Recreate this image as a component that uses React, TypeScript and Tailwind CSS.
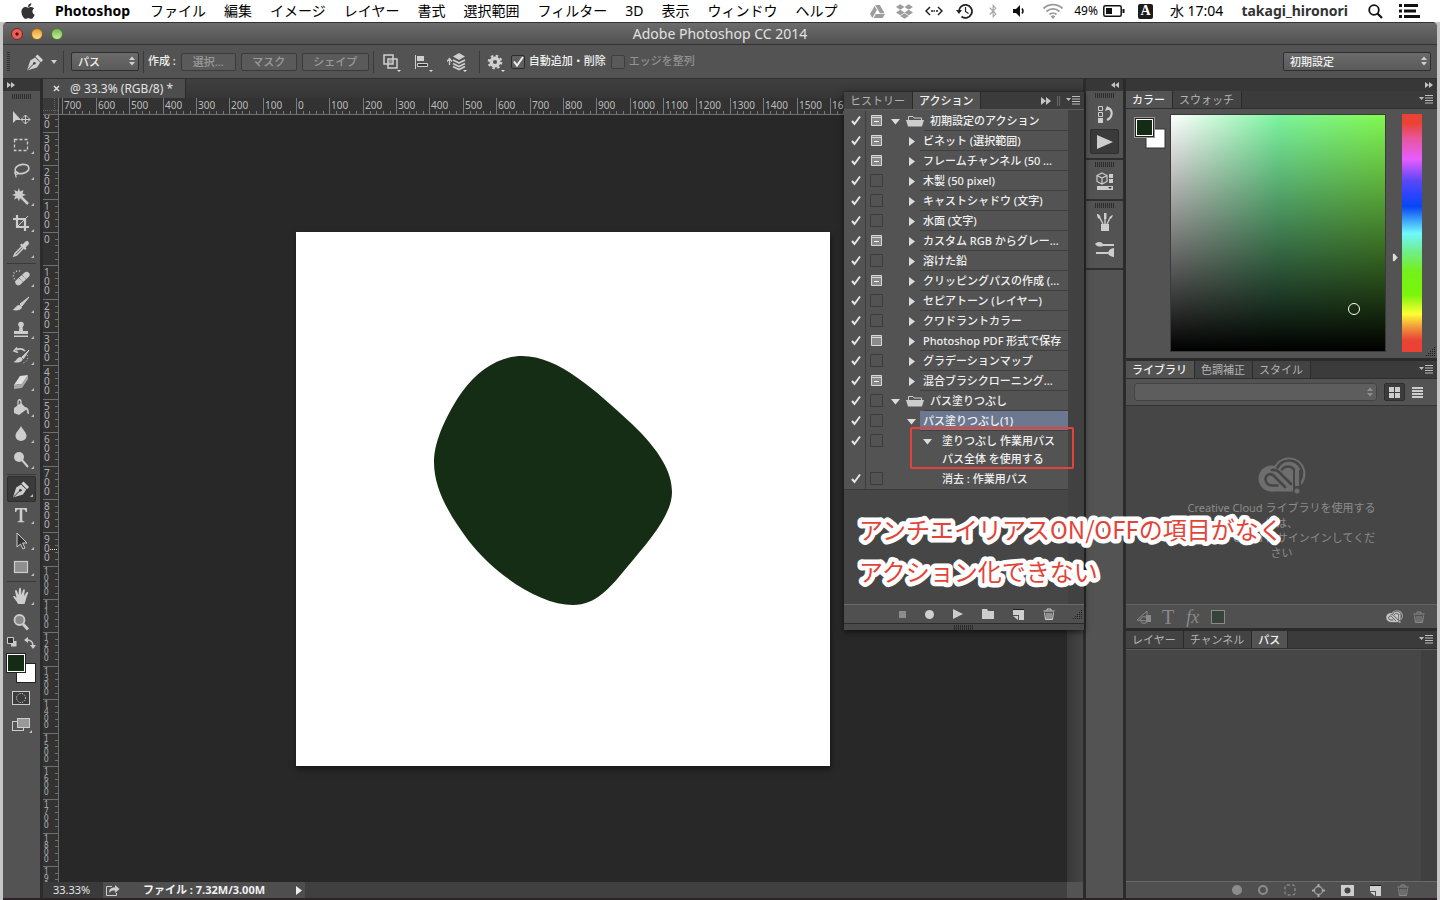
import type { ReactNode } from "react";
import { FaApple, FaBluetoothB, FaDropbox, FaGoogleDrive } from "react-icons/fa";

const MENUS = ["ファイル", "編集", "イメージ", "レイヤー", "書式", "選択範囲", "フィルター", "3D", "表示", "ウィンドウ", "ヘルプ"];

// px per 100 document units at 33.3%
const STEP = 33.37;
const ORIGIN_X = 237;
const ORIGIN_Y = 117;

type Row = {
  text: string;
  kind: "set" | "action" | "step";
  modal?: "dash" | "plain";
  open?: boolean;
  selected?: boolean;
  detail?: string;
};

const ROWS: Row[] = [
  { text: "初期設定のアクション", kind: "set", modal: "dash", open: true },
  { text: "ビネット (選択範囲)", kind: "action", modal: "dash" },
  { text: "フレームチャンネル (50 ...", kind: "action", modal: "dash" },
  { text: "木製 (50 pixel)", kind: "action" },
  { text: "キャストシャドウ (文字)", kind: "action" },
  { text: "水面 (文字)", kind: "action" },
  { text: "カスタム RGB からグレー...", kind: "action", modal: "dash" },
  { text: "溶けた鉛", kind: "action" },
  { text: "クリッピングパスの作成 (...", kind: "action", modal: "dash" },
  { text: "セピアトーン (レイヤー)", kind: "action" },
  { text: "クワドラントカラー", kind: "action" },
  { text: "Photoshop PDF 形式で保存", kind: "action", modal: "plain" },
  { text: "グラデーションマップ", kind: "action" },
  { text: "混合ブラシクローニング...", kind: "action", modal: "dash" },
  { text: "パス塗りつぶし", kind: "set", open: true },
  { text: "パス塗りつぶし(1)", kind: "action", open: true, selected: true },
  { text: "塗りつぶし 作業用パス", kind: "step", open: true, detail: "パス全体 を使用する" },
  { text: "消去 : 作業用パス", kind: "step" },
];

function Svg({ w, h, children, className = "" }: { w: number; h: number; children: ReactNode; className?: string }) {
  return (
    <svg width={w} height={h} viewBox={`0 0 ${w} ${h}`} fill="none" className={`shrink-0 ${className}`} aria-hidden="true">
      {children}
    </svg>
  );
}

/* ---------- small shared glyphs ---------- */

const PenNib = () => (
  <Svg w={20} h={20}>
    <path d="M12.5 2.5 18 8l-2 2.2-5.6-5.7z" fill="#d6d6d6" />
    <path d="M10 5.4 15.2 10.6 12 15.4 2 18.6 5.2 8.6z" fill="#cfcfcf" />
    <path d="M2.4 18.2 9 11.6" stroke="#444" strokeWidth="1" />
    <circle cx="9.4" cy="11.2" r="1.3" fill="#444" />
  </Svg>
);

const DoubleArrow = ({ left = false }: { left?: boolean }) => (
  <Svg w={8} h={6} className={left ? "rotate-180" : ""}>
    <path d="M0 0 4 3 0 6zM4 0 8 3 4 6z" fill="#c4c4c4" />
  </Svg>
);

const Gripper = () => (
  <Svg w={20} h={5}>
    {Array.from({ length: 10 }, (_, i) => (
      <rect key={i} x={i * 2} y={0} width={1} height={5} fill="#2c2c2c" />
    ))}
  </Svg>
);

const Stepper = ({ dim = false }: { dim?: boolean }) => (
  <Svg w={6} h={10}>
    <path d="M0 4 3 0.5 6 4zM0 6 3 9.5 6 6z" fill={dim ? "#8f8f8f" : "#d0d0d0"} />
  </Svg>
);

const Caret = () => (
  <Svg w={6} h={4}>
    <path d="M0 0h6L3 4z" fill="#d0d0d0" />
  </Svg>
);

const PanelMenu = () => (
  <button aria-label="パネルメニュー" className="flex items-center">
    <Svg w={14} h={9}>
      <path d="M0 2h5L2.500 5z" fill="#bdbdbd" />
      <path d="M6 .5h8M6 3h8M6 5.500h8M6 8h8" stroke="#bdbdbd" />
    </Svg>
  </button>
);

const ResizeCorner = () => (
  <Svg w={9} h={9}>
    {[0, 1, 2, 3, 4].map((r) =>
      Array.from({ length: r + 1 }, (_, c) => <rect key={`${r}-${c}`} x={8 - c * 2} y={r * 2} width={1} height={1} fill="#1f1f1f" />),
    )}
  </Svg>
);

const Trash = ({ dim = false }: { dim?: boolean }) => (
  <Svg w={12} h={12}>
    <g stroke={dim ? "#8a8a8a" : "#d0d0d0"}>
      <path d="M.5 3h11M4 2.500V1h4v1.500" />
      <path d="M1.500 4.500 2.500 11.500h7l1-7M4 5v6M6 5v6M8 5v6" />
    </g>
  </Svg>
);

const NewItem = () => (
  <Svg w={11} h={11}>
    <path d="M0 1h11v10H6V6H0z" fill="#cfcfcf" />
    <path d="M0 7h5v4z" fill="#cfcfcf" />
    <path d="M0 .5h11" stroke="#1c1c1c" />
  </Svg>
);

const CreativeCloud = ({ size, color, cut }: { size: number; color: string; cut: string }) => (
  <svg width={size} height={Math.round(size * 0.77)} viewBox="0 0 48 37" fill="none" aria-hidden="true">
    <circle cx="31" cy="17" r="16.500" fill={color} />
    <circle cx="13.500" cy="21.500" r="13" fill={color} />
    <path d="M13 20h26v14.500H13z" fill={color} />
    <path d="M19 11.500A13 13 0 0 1 44 17c0 3-1 5.500-2.500 7.500" stroke={cut} strokeWidth="2.600" />
    <path d="M27 30 15.500 18.500C12 15.500 7.500 18 7.500 22c0 4 3 6.500 7 6.500h5" stroke={cut} strokeWidth="2.600" strokeLinecap="round" />
    <path d="M14 13c3-.5 5.500.5 7.500 2.500L33 27" stroke={cut} strokeWidth="2.600" strokeLinecap="round" />
    <path d="M24 12.500c3-4 9-4 12 0" stroke={cut} strokeWidth="2.600" strokeLinecap="round" />
    <path d="M39 13v24" stroke={cut} strokeWidth="8" />
    <path d="M39 13v16" stroke={color} strokeWidth="4" />
    <circle cx="39" cy="34" r="2.500" fill={color} />
  </svg>
);

/* ---------- mac menu bar ---------- */

function MenuBar() {
  return (
    <header className="flex h-[22px] shrink-0 items-center justify-between bg-white pl-[19px] pr-5 text-[14px] leading-5 text-black">
      <nav className="flex items-center gap-[18px] whitespace-nowrap">
        <FaApple size={18} className="text-[#333]" />
        <button className="pr-0.5 font-bold">Photoshop</button>
        {MENUS.map((m) => (
          <button key={m}>{m}</button>
        ))}
      </nav>
      <div className="flex items-center whitespace-nowrap">
        <FaGoogleDrive size={15} className="mr-[11px] text-[#9d9d9d]" />
        <FaDropbox size={17} className="mr-3 text-[#9d9d9d]" />
        <Svg w={18} h={10} className="mr-[13px]">
          <path d="M5 1 1 5l4 4M13 1l4 4-4 4" stroke="#222" strokeWidth="1.500" />
          <path d="M6 5h2M8.500 5h1.500M11 5h2" stroke="#222" strokeWidth="1.500" />
        </Svg>
        <Svg w={17} h={16} className="mr-[13px]">
          <path d="M3 9a6.500 6.500 0 1 1 2.500 4.500" stroke="#222" strokeWidth="1.800" />
          <path d="M0 7h6L3 11z" fill="#222" />
          <path d="M9.500 4v4.500l3 2" stroke="#222" strokeWidth="1.200" />
        </Svg>
        <FaBluetoothB size={14} className="mr-[13px] text-[#a5a5a5]" />
        <Svg w={13} h={12} className="mr-4">
          <path d="M0 4h3l4-4v12L3 8H0z" fill="#111" />
          <path d="M9 3.500a4 4 0 0 1 0 5" stroke="#111" strokeWidth="1.500" />
        </Svg>
        <Svg w={22} h={16} className="mr-[10px]">
          <path d="M1.500 5.500a13.500 13.500 0 0 1 19 0M4.500 8.500a9.500 9.500 0 0 1 13 0M7.500 11.500a5 5 0 0 1 7 0" stroke="#9a9a9a" strokeWidth="1.800" />
          <path d="M11 16 8.800 13.500a3 3 0 0 1 4.400 0z" fill="#9a9a9a" />
        </Svg>
        <span className="mr-[5px] text-[12px]">49%</span>
        <Svg w={22} h={12} className="mr-[13px]">
          <rect x=".8" y=".8" width="17.400" height="10.400" rx="1.500" stroke="#111" strokeWidth="1.500" />
          <rect x="3" y="3" width="6" height="6" fill="#111" />
          <rect x="19.500" y="4" width="2" height="4" fill="#111" />
        </Svg>
        <span className="mr-[17px] flex h-[15px] w-[15px] items-center justify-center rounded-[2px] bg-[#1c1c1c] font-['Liberation_Serif'] text-[14px] font-bold text-white">
          A
        </span>
        <span className="mr-[18px]">水 17:04</span>
        <span className="mr-5 font-bold text-[#333]">takagi_hironori</span>
        <Svg w={15} h={15} className="mr-[16px]">
          <circle cx="6" cy="6" r="4.800" stroke="#111" strokeWidth="1.800" />
          <path d="m9.500 9.500 4.500 4.500" stroke="#111" strokeWidth="2.200" />
        </Svg>
        <Svg w={21} h={14}>
          <path d="M0 1.500h3M0 7h3M0 12.500h3M5 1.500h14M5 7h12M5 12.500h16" stroke="#111" strokeWidth="3" />
        </Svg>
      </div>
    </header>
  );
}

/* ---------- options bar ---------- */

const Divider = ({ className = "" }: { className?: string }) => <span className={`h-[22px] w-px bg-[#3a3a3a] ${className}`} />;

const OptButton = ({ children, className }: { children: ReactNode; className: string }) => (
  <button className={`h-[18px] rounded-[2px] border border-[#3b3b3b] bg-[#5a5a5a] leading-4 text-[#9a9a9a] ${className}`}>{children}</button>
);

function OptionsBar() {
  return (
    <div className="flex h-[34px] shrink-0 items-center border-b border-[#2f2f2f] bg-[#535353] pl-1 pr-1.5 text-[11px] font-medium text-[#f0f0f0]">
      <Svg w={4} h={19}>
        {Array.from({ length: 10 }, (_, i) => (
          <rect key={i} x={0} y={i * 2} width={3} height={1} fill="#333" />
        ))}
      </Svg>
      <button aria-label="ペンツール" className="ml-[14px] flex items-center gap-1.5">
        <PenNib />
        <Caret />
      </button>
      <Divider className="ml-1.5 mr-[7px]" />
      <div className="relative">
        <select aria-label="ツールモード" className="h-[19px] w-[68px] appearance-none rounded-[2px] border border-[#2e2e2e] bg-linear-to-b from-[#6a6a6a] to-[#5b5b5b] px-1.5 leading-4">
          <option>パス</option>
        </select>
        <span className="pointer-events-none absolute right-1 top-1">
          <Stepper />
        </span>
      </div>
      <Divider className="mx-1" />
      <span className="mr-[5px]">作成 :</span>
      <div className="flex gap-[5px]">
        <OptButton className="w-[55px]">選択...</OptButton>
        <OptButton className="w-[56px]">マスク</OptButton>
        <OptButton className="w-[67px]">シェイプ</OptButton>
      </div>
      <Divider className="ml-1 mr-[9px]" />
      <div className="flex items-center gap-3">
        <button aria-label="パスの操作">
          <Svg w={20} h={20}>
            <path d="M1 3h9v9H1zM5 7h9v9H5z" stroke="#d0d0d0" strokeWidth="1.500" />
            <path d="M6 8h3v3H6z" fill="#8a8a8a" />
            <path d="M14 18h4l-2 2z" fill="#ddd" />
          </Svg>
        </button>
        <button aria-label="パスの整列">
          <Svg w={20} h={20}>
            <path d="M.5 3v14" stroke="#d0d0d0" />
            <path d="M2 4h7v5H2z" fill="#d0d0d0" />
            <path d="M2.500 11.500h10v3h-10z" fill="#3a3a3a" stroke="#d0d0d0" />
            <path d="M14 18h4l-2 2z" fill="#ddd" />
          </Svg>
        </button>
        <button aria-label="パスの配置">
          <Svg w={22} h={20}>
            <path d="M2.500 13V8M0 9.500l2.500-3 2.500 3" stroke="#d0d0d0" strokeWidth="1.300" />
            <path d="m12 1 6 3.500L12 8 6 4.500z" fill="#cfcfcf" />
            <path d="m6 8 6 3 6-3M6 11.500l6 3 6-3M6 14.500l6 3 6-3" stroke="#cfcfcf" strokeWidth="1.800" />
            <path d="M16 18h4l-2 2z" fill="#ddd" />
          </Svg>
        </button>
      </div>
      <Divider className="ml-2.5 mr-[7px]" />
      <button aria-label="設定" className="mr-1">
        <Svg w={20} h={20}>
          <circle cx="8" cy="10" r="3.800" stroke="#d0d0d0" strokeWidth="3.400" />
          <circle cx="8" cy="10" r="6.200" stroke="#d0d0d0" strokeWidth="2.200" strokeDasharray="2.430 2.430" />
          <path d="M14 18h4l-2 2z" fill="#ddd" />
        </Svg>
      </button>
      <label className="flex items-center gap-1">
        <input type="checkbox" defaultChecked className="peer sr-only" />
        <span className="flex h-[14px] w-[14px] items-center justify-center rounded-[2px] border border-[#2c2c2c] bg-[#606060]">
          <Svg w={12} h={12}>
            <path d="m2 5.500 3 4L11 1" stroke="#f0f0f0" strokeWidth="2" />
          </Svg>
        </span>
        自動追加・削除
      </label>
      <label className="ml-[5px] flex items-center gap-1 text-[#929292]">
        <input type="checkbox" disabled className="sr-only" />
        <span className="h-[14px] w-[14px] rounded-[2px] border border-[#3e3e3e] bg-[#5a5a5a]" />
        エッジを整列
      </label>
      <div className="relative ml-auto">
        <select aria-label="ワークスペース" className="h-[19px] w-[148px] appearance-none rounded-[2px] border border-[#2e2e2e] bg-linear-to-b from-[#6a6a6a] to-[#5b5b5b] px-1.5 leading-4">
          <option>初期設定</option>
        </select>
        <span className="pointer-events-none absolute right-1 top-1">
          <Stepper />
        </span>
      </div>
    </div>
  );
}

/* ---------- tool box ---------- */

const L = "#cdcdcd";

const TOOLS: ({ name: string; icon: ReactNode; plain?: boolean; active?: boolean } | null)[] = [
  {
    name: "移動",
    plain: true,
    icon: (
      <>
        <path d="M2 2v12l3-3h5z" fill={L} />
        <path d="M14.500 6v9M10 10.500h9M12.500 8l2-2 2 2M12.500 13l2 2 2-2M12 8.500l-2 2 2 2M17 8.500l2 2-2 2" stroke={L} />
      </>
    ),
  },
  { name: "長方形選択", icon: <rect x="3.500" y="4.500" width="13" height="11" stroke={L} strokeWidth="1.300" strokeDasharray="3 2" /> },
  {
    name: "なげなわ",
    icon: (
      <>
        <ellipse cx="11" cy="8" rx="7" ry="4.500" transform="rotate(-12 11 8)" stroke={L} strokeWidth="1.600" />
        <path d="M4.500 10.500c-2 2 .5 3.500 2 2.500 1.500-1-1-3-2-1.500-1 2 1 3 .5 5" stroke={L} strokeWidth="1.200" />
      </>
    ),
  },
  {
    name: "自動選択",
    icon: (
      <>
        <path d="m8 1 1 3.500L12.500 3l-1 3.500L15 8l-3.500 1 1 3.500L9 11l-1 3.500L6.500 11 3 12.500 4.500 9 1 8l3.500-1.500L3 3l3.500 1.500z" fill={L} />
        <path d="m10 10 7 7" stroke={L} strokeWidth="2.500" />
      </>
    ),
  },
  {
    name: "切り抜き",
    icon: (
      <>
        <path d="M6 2v12h12M2 6h12v12" stroke={L} strokeWidth="2.200" />
        <path d="M7 13 17 3" stroke={L} />
      </>
    ),
  },
  {
    name: "スポイト",
    icon: (
      <>
        <path d="M11 7.500 4 14.500 3 17l2.500-1 7-7" stroke={L} strokeWidth="1.500" />
        <path d="m9 6 5 5 1.500-1.500-1-1 3-3c1.500-2-1-4.500-3-3l-3 3-1-1z" fill={L} />
      </>
    ),
  },
  null,
  {
    name: "スポット修復ブラシ",
    icon: (
      <>
        <path d="M9 3C4 2 1 6 3 10s3 5 2 6" stroke={L} strokeDasharray="1 2" strokeWidth="1.400" />
        <rect x="3" y="7.500" width="17" height="6" rx="3" transform="rotate(-42 11.500 10.500)" fill={L} />
        <path d="m8 10 4 4M11 7l4 4" stroke="#666" strokeDasharray="1 1" />
      </>
    ),
  },
  {
    name: "ブラシ",
    icon: (
      <>
        <path d="M18 3 9 10l2 2z" fill={L} stroke={L} />
        <path d="M8 11c2 0 3 1 3 2.500-1 3-6 3.500-9.500 2.500C4 15 5 11.500 8 11z" fill={L} />
      </>
    ),
  },
  {
    name: "コピースタンプ",
    icon: (
      <>
        <circle cx="10" cy="4.500" r="2.800" fill={L} />
        <path d="M8.500 6h3l.5 5h5v3H3v-3h5zM3 15.500h14v1.500H3z" fill={L} />
      </>
    ),
  },
  {
    name: "ヒストリーブラシ",
    icon: (
      <>
        <path d="M5 4c4-2 7-1 9 1M6 1.500 3 5l4 1.500" stroke={L} strokeWidth="1.500" />
        <path d="m18 4-7 7 1.500 1.500z" fill={L} stroke={L} />
        <path d="M9 11c2 0 3 1 2.500 3-2 3-6 3-9 2 3-1 3-4 6.500-5z" fill={L} />
        <path d="M16 9c2 3 0 7-4 8" stroke={L} strokeDasharray="1 2" />
      </>
    ),
  },
  {
    name: "消しゴム",
    icon: (
      <>
        <path d="m9 4 8-1-6 9-8 1z" fill="#e0e0e0" />
        <path d="m3 13 8-1v4l-8 1zM11 12l6-9v4l-6 9z" fill="#a8a8a8" />
      </>
    ),
  },
  {
    name: "塗りつぶし",
    icon: (
      <>
        <path d="m3 10 7-5 6 6-8 6-5-2z" fill={L} />
        <path d="M7 9V4c0-3 3-3 3 0v4" stroke={L} strokeWidth="1.300" />
        <path d="M14 9c3 0 4 3 4 7-2 0-2-2-2-3z" fill={L} />
      </>
    ),
  },
  { name: "ぼかし", icon: <path d="M10 2c2 4 5.500 6.500 5.500 10a5.500 5 0 0 1-11 0C4.500 8.500 8 6 10 2z" fill={L} /> },
  {
    name: "覆い焼き",
    icon: (
      <>
        <circle cx="8" cy="7" r="5" fill={L} />
        <path d="m11 10 6 7" stroke={L} strokeWidth="2" />
      </>
    ),
  },
  null,
  {
    name: "ペン",
    active: true,
    icon: (
      <>
        <path d="M12.500 2.500 18 8l-2 2.200-5.600-5.700z" fill="#d6d6d6" />
        <path d="M10 5.400 15.200 10.600 12 15.400 2 18.600 5.200 8.600z" fill={L} />
        <path d="M2.400 18.200 9 11.600" stroke="#333" />
        <circle cx="9.400" cy="11.200" r="1.300" fill="#333" />
      </>
    ),
  },
  { name: "横書き文字", icon: <path d="M4 3h12v4h-1.200c-.3-1.800-.8-2.600-2.300-2.600h-1.200V15c0 1 .6 1.200 2 1.300v.9H6.700v-.9c1.400-.1 2-.3 2-1.300V4.400H7.500C6 4.400 5.500 5.200 5.200 7H4z" fill={L} /> },
  { name: "パス選択", icon: <path d="M6 2v14l3.500-3 2.500 5 2-1-2.500-5h4.500z" fill="#333" stroke={L} /> },
  { name: "長方形", icon: <rect x="3.500" y="4.500" width="13" height="11" fill="#8f8f8f" stroke={L} strokeWidth="1.200" /> },
  null,
  {
    name: "手のひら",
    icon: <path d="M7 18c-1-3-4-5-5-7.500.8-1 2-.5 3.500 1.500L4 5c.3-1.500 1.500-1.500 2 0l1.500 4L8 3c.3-1.600 1.800-1.600 2 0l.5 6 1.500-5c.5-1.400 2-1 1.800.5L13 10l2.500-3.500c1-1 2-.3 1.500 1-2 4-2 7-3.500 10.500z" fill={L} />,
  },
  {
    name: "ズーム",
    plain: true,
    icon: (
      <>
        <circle cx="8.500" cy="8" r="5" fill="#888" stroke={L} strokeWidth="1.800" />
        <path d="m12 12 5 5.500" stroke={L} strokeWidth="3" />
      </>
    ),
  },
];

function ToolBox() {
  return (
    <aside className="flex w-[37px] shrink-0 flex-col bg-[#535353]">
      <div className="flex h-3 items-center bg-[#373737] pl-1">
        <DoubleArrow />
      </div>
      <div className="mt-[3px] flex h-3 justify-center">
        <Gripper />
      </div>
      <div className="flex flex-col px-1">
        {TOOLS.map((t, i) =>
          t ? (
            <button
              key={t.name}
              aria-label={t.name}
              className={`relative flex h-[26px] items-center justify-center rounded-[2px] pr-0.5 ${t.active ? "border border-[#2e2e2e] bg-[#3a3a3a]" : ""}`}
            >
              <Svg w={20} h={20}>{t.icon}</Svg>
              {!t.plain && (
                <span className="absolute bottom-1 right-0.5">
                  <Svg w={3} h={3}>
                    <path d="M3 0v3H0z" fill="#c0c0c0" />
                  </Svg>
                </span>
              )}
            </button>
          ) : (
            <span key={i} className="my-px h-px border-t border-[#3a3a3a]" />
          ),
        )}
      </div>
      <div className="mt-0.5 flex justify-between px-1">
        <Svg w={10} h={10}>
          <path d="M4 4h5.500v5.500H4z" fill={L} />
          <path d="M.5.5h6v6h-6z" fill="#333" stroke={L} />
        </Svg>
        <Svg w={12} h={12}>
          <path d="M3 3c4 0 6 2 6 6" stroke={L} strokeWidth="1.300" />
          <path d="M0 3 4 0v6zM9 12 6 8h6z" fill={L} />
        </Svg>
      </div>
      <div className="mt-1 flex justify-center pr-0.5">
        <Svg w={30} h={30}>
          <rect x="10.500" y="10.500" width="19" height="19" fill="#fff" stroke="#222" />
          <rect x="0" y="0" width="20" height="20" fill="#222" />
          <rect x="1.500" y="1.500" width="17" height="17" fill="#142b14" stroke="#fff" />
        </Svg>
      </div>
      <button aria-label="クイックマスク" className="mt-2 flex justify-center pr-0.5">
        <Svg w={18} h={14}>
          <rect x=".5" y=".5" width="17" height="13" fill="#3c3c3c" stroke={L} />
          <circle cx="9" cy="7" r="4.500" stroke="#eee" strokeDasharray="1 1.400" />
        </Svg>
      </button>
      <button aria-label="スクリーンモード" className="mt-3 flex justify-center">
        <Svg w={20} h={16}>
          <rect x=".5" y="4.500" width="11" height="9" fill="#555" stroke={L} />
          <rect x="5.500" y="1.500" width="12" height="9" fill="#999" stroke={L} />
          <path d="M20 13v3h-3z" fill="#c0c0c0" />
        </Svg>
      </button>
    </aside>
  );
}

/* ---------- document ---------- */

function HorizontalRuler() {
  return (
    <svg width="100%" height="16" className="block overflow-hidden" aria-hidden="true">
      <g className="[font-family:'Noto_Sans',sans-serif]">
        {Array.from({ length: 24 }, (_, i) => i - 7).map((n) => {
          const x = Math.round(ORIGIN_X + n * STEP);
          return (
            <g key={n}>
              <path d={`M${x + 0.5} 0V16`} stroke="#7a7a7a" />
              <text x={x + 2} y={11} fontSize="10" fill="#bcbcbc">
                {Math.abs(n) * 100}
              </text>
              {[1, 2, 3, 4].map((k) => (
                <path key={k} d={`M${Math.round(x + (k * STEP) / 5) + 0.5} 13V16`} stroke="#7a7a7a" />
              ))}
            </g>
          );
        })}
      </g>
    </svg>
  );
}

function VerticalRuler() {
  return (
    <svg width="16" height="100%" className="absolute inset-0 h-full overflow-hidden" aria-hidden="true">
      <g className="[font-family:'Noto_Sans',sans-serif]">
        {Array.from({ length: 24 }, (_, i) => i - 4).map((n) => {
          const y = Math.round(ORIGIN_Y + n * STEP);
          const digits = String(Math.abs(n) * 100).split("");
          const long = digits.length > 3;
          return (
            <g key={n}>
              <path d={`M0 ${y + 0.5}H16`} stroke="#6f6f6f" />
              {digits.map((d, i) => (
                <text key={i} x={1} y={long ? y + 8 + i * 7 : y + 11 + i * 9} fontSize={long ? 8 : 10} fill="#b4b4b4">
                  {d}
                </text>
              ))}
              {[1, 2, 3, 4].map((k) => (
                <path key={k} d={`M12 ${Math.round(y + (k * STEP) / 5) + 0.5}H16`} stroke="#6f6f6f" />
              ))}
            </g>
          );
        })}
        <path d="M7 434.500H15" stroke="#ddd" strokeDasharray="1 1" />
      </g>
    </svg>
  );
}

function DocumentArea() {
  return (
    <main className="relative flex min-w-0 flex-1 flex-col bg-[#282828]">
      <div className="flex h-[19px] shrink-0 bg-linear-to-b from-[#3f3f3f] to-[#363636]">
        <div className="flex items-center gap-2.5 border-r border-[#2a2a2a] bg-[#4d4d4d] pl-2.5 pr-3 text-[12px] text-[#e2e2e2]">
          <button aria-label="閉じる">
            <Svg w={7} h={7}>
              <path d="m1 1 5 5M6 1 1 6" stroke="#ddd" strokeWidth="1.500" />
            </Svg>
          </button>
          <span className="whitespace-nowrap">@ 33.3% (RGB/8) *</span>
        </div>
      </div>
      <div className="flex h-[17px] shrink-0 border-b border-[#6f6f6f] bg-[#323232]">
        <div className="w-4 shrink-0 border-r border-[#6f6f6f] bg-[#3a3a3a]">
          <Svg w={15} h={16}>
            <path d="M11.500 0v16M0 12.500h15" stroke="#666" strokeDasharray="1 1" />
          </Svg>
        </div>
        <div className="min-w-0 flex-1 overflow-hidden">
          <HorizontalRuler />
        </div>
      </div>
      <div className="flex min-h-0 flex-1">
        <div className="relative w-4 shrink-0 overflow-hidden border-r border-[#6f6f6f] bg-[#323232]">
          <VerticalRuler />
        </div>
        <div className="relative min-w-0 flex-1 overflow-hidden">
          {/* artboard */}
          <div className="absolute left-[237px] top-[117px] h-[534px] w-[534px] bg-white shadow-[1px_3px_6px_rgba(0,0,0,0.5)]">
            <svg viewBox="0 0 534 534" className="h-full w-full">
              <path
                d="M226 124C263 124 300 159 336 192C364 219 376 240 376 260C376 284 351 311 332 334C314 356 300 373 277 373C244 373 199 343 172 308C152 281 138 256 138 230C138 208 152 180 166 160C182 138 204 124 226 124Z"
                fill="#162d15"
              />
            </svg>
          </div>
        </div>
        <div className="w-4 shrink-0 bg-linear-to-r from-[#383838] to-[#454545]" />
      </div>
      <div className="flex h-4 shrink-0 items-stretch bg-[#404040] text-[11px] text-[#e4e4e4]">
        <span className="w-[60px] bg-[#3a3a3a] pl-2.5 leading-4">33.33%</span>
        <div className="flex w-[202px] items-center bg-[#4e4e4e] pl-[3px] pr-[3px] font-bold text-[#f2f2f2]">
          <Svg w={14} h={13}>
            <path d="M6 2.500H.5v9h10V9" stroke={L} />
            <path d="M3 9c0-4 2-5.500 6-5.500V1l4.500 4L9 9V6.500C6 6.500 4.500 7 3 9z" fill={L} />
          </Svg>
          <span className="ml-[23px] whitespace-nowrap">ファイル : 7.32M/3.00M</span>
          <Svg w={6} h={9} className="ml-auto">
            <path d="M0 0v9l6-4.500z" fill="#eee" />
          </Svg>
        </div>
        <span className="ml-auto w-4 bg-[#535353]" />
      </div>
      <ActionsPanel />
    </main>
  );
}

/* ---------- actions panel ---------- */

const Folder = () => (
  <Svg w={18} h={12}>
    <path d="M2.500 5V1.500H7l1 1.500h7.500v2" stroke={L} />
    <path d="M0 5h18l-2 6.500H2z" fill={L} />
  </Svg>
);

const Disclosure = ({ open }: { open?: boolean }) => (
  <Svg w={9} h={9}>{open ? <path d="M0 2h9L4.500 7.500z" fill="#ddd" /> : <path d="M2 0v9l6-4.500z" fill="#ddd" />}</Svg>
);

function ActionRow({ row }: { row: Row }) {
  const indent = row.kind === "set" ? "ml-1" : row.kind === "action" ? "ml-5" : "ml-[36px]";
  return (
    <li className="flex text-[11px] font-medium leading-[18px] text-[#f0f0f0]">
      <button aria-label="実行の切り替え" className="flex min-h-5 w-[22px] shrink-0 items-start justify-center border-r border-[#3d3d3d] pl-0.5 pt-1">
        <Svg w={10} h={11}>
          <path d="m1 6 2.500 3L9 1.500" stroke="#e6e6e6" strokeWidth="2" />
        </Svg>
      </button>
      <button aria-label="ダイアログの切り替え" className="flex h-5 w-[21px] shrink-0 items-start justify-center pt-[3px]">
        <Svg w={13} h={13}>
          {row.modal ? (
            <>
              <path d="M1.500 1.500h10v10h-10z" fill="#8a8a8a" stroke="#d8d8d8" />
              <path d="M1 3.500h11" stroke="#d8d8d8" />
              {row.modal === "dash" && <path d="M4 7.500h5" stroke="#fff" />}
            </>
          ) : (
            <path d="M.5.500h12v12H.5z" stroke="#3c3c3c" />
          )}
        </Svg>
      </button>
      <div className={`flex min-w-0 flex-1 ${indent}`}>
        <span className="flex h-5 w-[9px] shrink-0 items-center">{(row.open || row.kind !== "step") && <Disclosure open={row.open} />}</span>
        {row.kind === "set" && (
          <span className="ml-1.5 flex h-5 items-center">
            <Folder />
          </span>
        )}
        <div
          className={`min-w-0 flex-1 whitespace-nowrap pt-px ${
            row.kind === "set" ? "pl-1.5" : row.kind === "step" ? "pl-2.5" : "ml-1 pl-[3px]"
          } ${row.kind === "step" ? "pb-px" : "border-b border-[#3f3f3f]"} ${row.selected ? "bg-[#6c7890]" : ""}`}
        >
          {row.text}
          {row.detail && <div>{row.detail}</div>}
        </div>
      </div>
    </li>
  );
}

const Tab = ({ children, active = false }: { children: ReactNode; active?: boolean }) => (
  <button
    role="tab"
    aria-selected={active}
    className={`h-full whitespace-nowrap border-r border-[#2a2a2a] pl-1.5 pr-[7px] pt-px text-[11px] leading-4 ${
      active ? "bg-[#535353] font-medium text-[#f2f2f2]" : "bg-[#434343] text-[#b4b4b4]"
    }`}
  >
    {children}
  </button>
);

function ActionsPanel() {
  return (
    <section className="absolute -right-px top-3 flex h-[539px] w-[240px] flex-col bg-[#464646] shadow-[0_2px_6px_rgba(0,0,0,0.6)]">
      <div role="tablist" className="flex h-[18px] shrink-0 items-center border-t border-[#2b2b2b] bg-[#3b3b3b] pr-1">
        <Tab>ヒストリー</Tab>
        <Tab active>アクション</Tab>
        <span className="ml-auto flex items-center gap-1.5">
          <Svg w={10} h={8}>
            <path d="M0 0 5 4 0 8zM5 0l5 4-5 4z" fill="#c4c4c4" />
          </Svg>
          <span className="h-2.5 w-[3px] border-x border-[#666]" />
          <PanelMenu />
        </span>
      </div>
      <div className="flex min-h-0 flex-1 border-t border-[#5c5c5c]">
        <div className="min-w-0 flex-1">
          <ul className="border-b border-[#3a3a3a] bg-[#535353] pt-px">
            {ROWS.map((r) => (
              <ActionRow key={r.text} row={r} />
            ))}
          </ul>
        </div>
        <div className="w-4 shrink-0 bg-[#414141]" />
      </div>
      <div className="relative flex h-[19px] shrink-0 items-center justify-end gap-[19px] border-t border-[#6a6a6a] bg-[#505050] pr-[29px]">
        <button aria-label="停止" className="h-[7px] w-[7px] bg-[#8c8c8c]" />
        <button aria-label="記録" className="h-[9px] w-[9px] rounded-full bg-[#d0d0d0]" />
        <button aria-label="再生">
          <Svg w={10} h={10}>
            <path d="M0 0v10l10-5z" fill={L} />
          </Svg>
        </button>
        <button aria-label="新規セット">
          <Svg w={12} h={10}>
            <path d="M0 0h5l1 2h6v8H0z" fill={L} />
          </Svg>
        </button>
        <button aria-label="新規アクション">
          <NewItem />
        </button>
        <button aria-label="削除">
          <Trash />
        </button>
        <span className="absolute bottom-1 right-0.5">
          <ResizeCorner />
        </span>
      </div>
      <div className="flex h-[7px] shrink-0 items-center justify-center border-t border-[#2b2b2b] bg-[#4a4a4a]">
        <Gripper />
      </div>

      {/* callout frame and note */}
      <div className="pointer-events-none absolute left-[66px] top-[336px] h-[42px] w-[164px] rounded-[2px] border-2 border-[#e2443a]" />
      <svg
        width="440"
        height="90"
        viewBox="0 0 440 90"
        className="pointer-events-none absolute left-2 top-[414px] z-20 max-w-none [font-family:'Noto_Sans_CJK_JP',sans-serif]"
      >
        <g fontSize="24" fill="#e2443a" stroke="#fff" strokeWidth="9" strokeLinejoin="round" strokeLinecap="round" paintOrder="stroke">
          <text x="7" y="34">
            アンチエイリアスON/OFFの項目がなく
          </text>
          <text x="7" y="76">
            アクション化できない
          </text>
        </g>
      </svg>
    </section>
  );
}

/* ---------- docks on the right ---------- */

const DockGroup = ({ children }: { children: ReactNode }) => (
  <div className="flex flex-col items-center border-b-2 border-[#2f2f2f] bg-[#535353] pb-1 pt-0.5">
    <Gripper />
    {children}
  </div>
);

function IconDock() {
  return (
    <aside className="flex w-[37px] shrink-0 flex-col bg-[#535353]">
      <div className="flex h-3 items-center justify-end bg-[#373737] pr-1">
        <DoubleArrow left />
      </div>
      <DockGroup>
        <button aria-label="ヒストリー" className="mt-[3px] flex h-7 items-center">
          <Svg w={18} h={20}>
            <path d="M2.500 1.500h4v4h-4zM2.500 7.500h4v4h-4z" stroke={L} />
            <path d="M2 13h5v5H2z" fill={L} />
            <path d="m9 6 2-5 4 3z" fill={L} />
            <path d="M12 3c5 2 5 9-1 12" stroke={L} strokeWidth="2.200" />
          </Svg>
        </button>
        <button aria-label="アクション" className="flex h-[25px] w-[29px] items-center justify-center rounded-[2px] border border-[#2e2e2e] bg-[#3a3a3a]">
          <Svg w={16} h={14}>
            <path d="M0 0v14l16-7z" fill={L} />
          </Svg>
        </button>
      </DockGroup>
      <DockGroup>
        <button aria-label="プロパティ" className="flex h-[28px] items-center">
          <Svg w={18} h={20}>
            <path d="m6 2 5 2.500v6L6 13l-5-2.500v-6zM1 4.500 6 7l5-2.500M6 7v6" stroke={L} strokeWidth="1.200" />
            <path d="M13 3h4v4h-4zM13 8h4v4h-4zM1 15h16v4H1z" fill={L} />
            <path d="M12 16h4l-2 2z" fill="#333" />
          </Svg>
        </button>
      </DockGroup>
      <DockGroup>
        <button aria-label="ブラシ" className="flex h-7 items-center">
          <Svg w={18} h={20}>
            <path d="M5 12h8v7H5zM1 2c2 0 4 2 3.500 5C2 7 1 5 1 2zM8 1h2.500v6H8zM17 3c-1 3-2 4-4 4.500 0-2 1-4 4-4.500z" fill={L} />
            <path d="m4 6 3 6M9 7v5M13.500 7 11 12" stroke={L} strokeWidth="1.400" />
          </Svg>
        </button>
        <button aria-label="ブラシプリセット" className="flex h-[28px] items-center">
          <Svg w={20} h={18}>
            <path d="M0 3c3-3 7-2 8 0v2C6 6 2 6 0 3zM19 7v9c-3 0-6-2-6-4s3-5 6-5z" fill={L} />
            <path d="M8 4h11M1 12h12" stroke={L} strokeWidth="2" />
          </Svg>
        </button>
      </DockGroup>
    </aside>
  );
}

const TabBar = ({ children }: { children: ReactNode }) => (
  <div role="tablist" className="flex h-[18px] shrink-0 items-center border-b border-[#2f2f2f] bg-[#3b3b3b] pr-1">
    {children}
    <span className="ml-auto">
      <PanelMenu />
    </span>
  </div>
);

function ColorPanel() {
  return (
    <section className="flex h-[267px] shrink-0 flex-col bg-[#535353]">
      <TabBar>
        <Tab active>カラー</Tab>
        <Tab>スウォッチ</Tab>
      </TabBar>
      <div className="relative flex flex-1 pb-1.5 pl-2 pr-[15px] pt-[5px]">
        <Svg w={32} h={32} className="mt-[3px]">
          <rect x="12" y="12" width="19" height="19" fill="#fff" stroke="#333" />
          <rect x=".5" y=".5" width="20" height="20" fill="#222" stroke="#999" />
          <rect x="2.500" y="2.500" width="16" height="16" fill="#142b14" stroke="#fff" />
        </Svg>
        <div className="relative ml-1 flex-1 border border-[#3a3a3a] bg-[linear-gradient(to_bottom,rgba(0,0,0,0),#000),linear-gradient(to_right,#fff,#7cf5a0_50%,#82f850)]">
          <span className="absolute bottom-9 right-[25px] h-3 w-3 rounded-full border border-white" />
        </div>
        <span className="ml-[6px] mr-[3px] mt-[139px]">
          <Svg w={7} h={9}>
            <path d="M.5.500h2L6 4.500 2.500 8.500h-2z" fill="#ddd" stroke="#333" strokeWidth=".5" />
          </Svg>
        </span>
        <div className="w-5 bg-[linear-gradient(to_bottom,#ea4335_4%,#e8559a_10%,#e75cff_19%,#5a48f5_28%,#2a44ff_34%,#0747f5_39%,#6ef8ff_50%,#70ee88_58%,#74f01c_66%,#7af50a_76%,#ffff35_84%,#f0903a_90%,#ea4335_95%)]" />
        <span className="absolute bottom-0.5 right-0.5">
          <ResizeCorner />
        </span>
      </div>
    </section>
  );
}

function LibraryPanel() {
  return (
    <section className="flex h-[267px] shrink-0 flex-col bg-[#464646]">
      <TabBar>
        <Tab active>ライブラリ</Tab>
        <Tab>色調補正</Tab>
        <Tab>スタイル</Tab>
      </TabBar>
      <div className="flex h-[27px] shrink-0 items-center border-b border-[#333] bg-[#535353] pl-2 pr-3">
        <div className="relative flex-1">
          <select aria-label="ライブラリ" disabled className="block h-[18px] w-full appearance-none rounded-[3px] border border-[#434343] bg-[#5d5d5d]">
            <option></option>
          </select>
          <span className="absolute right-1 top-1">
            <Stepper dim />
          </span>
        </div>
        <button aria-label="グリッド表示" className="ml-[7px] flex h-[18px] w-[21px] items-center justify-center rounded-[2px] border border-[#2e2e2e] bg-[#3c3c3c]">
          <Svg w={11} h={11}>
            <path d="M0 0h5v5H0zM6 0h5v5H6zM0 6h5v5H0zM6 6h5v5H6z" fill={L} />
          </Svg>
        </button>
        <button aria-label="リスト表示" className="ml-[7px] mr-0.5">
          <Svg w={11} h={11}>
            <path d="M0 1h11M0 4h11M0 7h11M0 10h11" stroke={L} strokeWidth="2" />
          </Svg>
        </button>
      </div>
      <div className="flex flex-1 flex-col items-center pt-[51px] text-center text-[11px] leading-[15px] text-[#8c8c8c]">
        <CreativeCloud size={48} color="#6e6e6e" cut="#464646" />
        <p className="mt-1.5 whitespace-nowrap">
          Creative Cloud ライブラリを使用する
          <br />
          には、
          <br />
          Creative Cloud にサインインしてくだ
          <br />
          さい
        </p>
      </div>
      <div className="flex h-6 shrink-0 items-center border-t border-[#636363] bg-[#505050] pl-2.5 pr-3 text-[#8a8a8a]">
        <button aria-label="グラフィックを追加">
          <Svg w={16} h={14}>
            <path d="M1 10 11 1v10z" stroke="#8a8a8a" />
            <circle cx="8" cy="10" r="3.500" stroke="#8a8a8a" />
            <path d="M10 5h5v7h-5z" fill="#8a8a8a" />
          </Svg>
        </button>
        <button aria-label="文字スタイルを追加" className="ml-2.5 font-['Liberation_Serif'] text-[20px] leading-5">
          T
        </button>
        <button aria-label="レイヤースタイルを追加" className="ml-3 font-['Liberation_Serif'] text-[18px] italic leading-5">
          fx
        </button>
        <button aria-label="描画色を追加" className="ml-3 h-[14px] w-[14px] border border-[#8a8a8a] bg-[#36433a]" />
        <span className="ml-auto mr-2.5">
          <CreativeCloud size={17} color="#c4c4c4" cut="#505050" />
        </span>
        <button aria-label="削除">
          <Trash dim />
        </button>
      </div>
    </section>
  );
}

function PathsPanel() {
  return (
    <section className="flex min-h-0 flex-1 flex-col bg-[#464646]">
      <TabBar>
        <Tab>レイヤー</Tab>
        <Tab>チャンネル</Tab>
        <Tab active>パス</Tab>
      </TabBar>
      <div className="flex flex-1 justify-end border-t border-[#5c5c5c]">
        <span className="w-4 bg-[#404040]" />
      </div>
      <div className="flex h-[17px] shrink-0 items-center justify-end gap-4 border-t border-[#6a6a6a] bg-[#505050] pr-[28px]">
        <button aria-label="パスを塗りつぶす" className="h-[10px] w-[10px] rounded-full bg-[#8c8c8c]" />
        <button aria-label="境界線を描く" className="h-[10px] w-[10px] rounded-full border-2 border-[#8c8c8c]" />
        <button aria-label="選択範囲として読み込む">
          <Svg w={12} h={12}>
            <rect x="1" y="1" width="10" height="10" rx="2" stroke="#9c9c9c" strokeDasharray="3 2" />
          </Svg>
        </button>
        <button aria-label="作業用パスを作成">
          <Svg w={13} h={13}>
            <circle cx="6.500" cy="6.500" r="4" stroke="#9c9c9c" strokeWidth="1.300" />
            <path d="M5.500 0h2v3h-2zM5.500 10h2v3h-2zM0 5.500h3v2H0zM10 5.500h3v2h-3z" fill="#a8a8a8" />
          </Svg>
        </button>
        <button aria-label="マスクを追加">
          <Svg w={13} h={11}>
            <path d="M0 0h13v11H0z" fill={L} />
            <circle cx="6.500" cy="5.500" r="3" fill="#444" />
          </Svg>
        </button>
        <button aria-label="新規パス">
          <NewItem />
        </button>
        <button aria-label="削除">
          <Trash dim />
        </button>
      </div>
    </section>
  );
}

export default function App() {
  return (
    <div className="flex h-screen min-w-[1200px] flex-col overflow-hidden bg-[#c6c6c6] [font-family:'Noto_Sans','Noto_Sans_CJK_JP',sans-serif]">
      <MenuBar />
      <div className="mx-[3px] flex min-h-0 flex-1 flex-col overflow-hidden rounded-t-[5px] border-b-2 border-[#2a2226] bg-[#2b2b2b]">
        <div className="relative flex h-[23px] shrink-0 items-center justify-center border-y border-[#333] bg-linear-to-b from-[#6c6c6c] to-[#525252]">
          <div className="absolute left-2 flex gap-2">
            <button aria-label="閉じる" className="h-3 w-3 rounded-full border border-[#7b2520] bg-radial from-[#5a0a08] from-15% to-[#e8605a] to-30%" />
            <button aria-label="しまう" className="h-3 w-3 rounded-full border border-[#8a6020] bg-linear-to-b from-[#e89a30] to-[#fbe08a]" />
            <button aria-label="拡大" className="h-3 w-3 rounded-full border border-[#4a7a30] bg-linear-to-b from-[#7ab850] to-[#c8f0a0]" />
          </div>
          <h1 className="text-[14px] leading-5 text-[#e2e2e2]">Adobe Photoshop CC 2014</h1>
        </div>
        <OptionsBar />
        <div className="flex min-h-0 flex-1 gap-[3px]">
          <ToolBox />
          <DocumentArea />
          <IconDock />
          <aside className="flex w-[311px] shrink-0 flex-col">
            <div className="flex h-3 shrink-0 items-center justify-end bg-[#373737] pr-1">
              <DoubleArrow />
            </div>
            <div className="flex min-h-0 flex-1 flex-col gap-[3px]">
              <ColorPanel />
              <LibraryPanel />
              <PathsPanel />
            </div>
          </aside>
        </div>
      </div>
    </div>
  );
}
